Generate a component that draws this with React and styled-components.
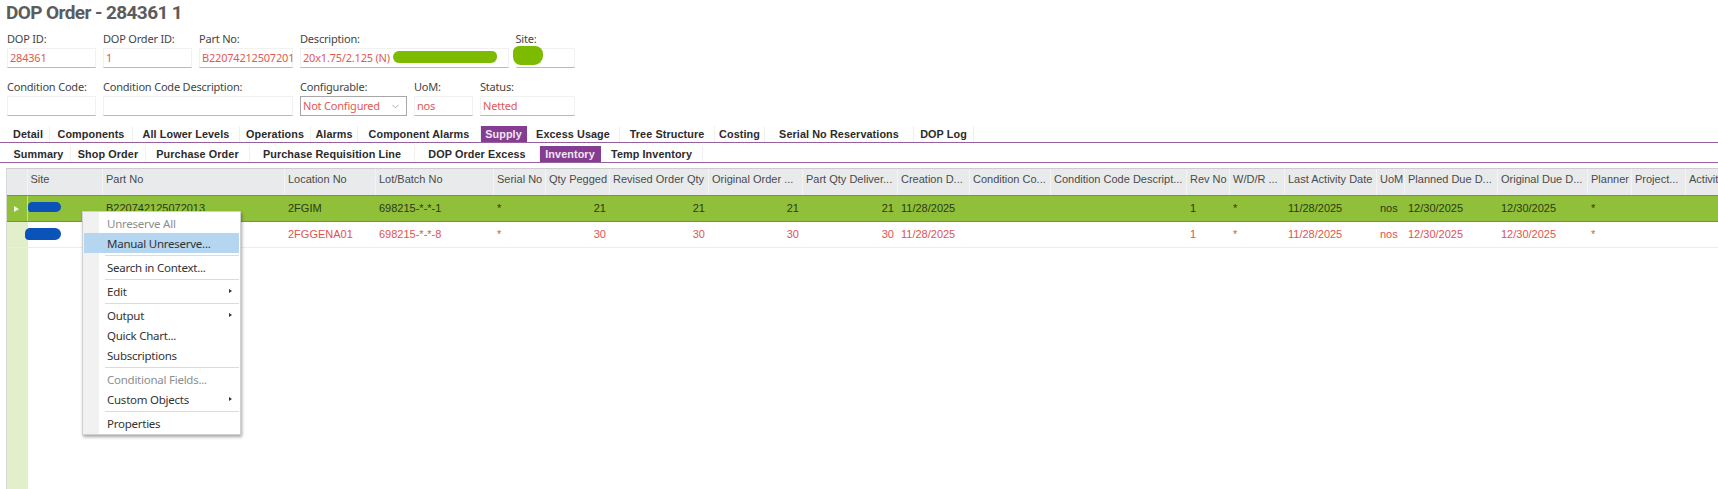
import React from 'react';
import styled, { createGlobalStyle } from 'styled-components';
import { ChevronDown } from 'lucide-react';

const mainTabs = [
  ['Detail', 43],
  ['Components', 83],
  ['All Lower Levels', 107],
  ['Operations', 71],
  ['Alarms', 47],
  ['Component Alarms', 123],
  ['Supply', 46, true],
  ['Excess Usage', 93],
  ['Tree Structure', 95],
  ['Costing', 50],
  ['Serial No Reservations', 149],
  ['DOP Log', 60],
];

const subTabs = [
  ['Summary', 64],
  ['Shop Order', 75],
  ['Purchase Order', 104],
  ['Purchase Requisition Line', 165],
  ['DOP Order Excess', 125],
  ['Inventory', 61, true],
  ['Temp Inventory', 102],
];

const columns = [
  ['Site', 75.5],
  ['Part No', 182],
  ['Location No', 91],
  ['Lot/Batch No', 118],
  ['Serial No', 52],
  ['Qty Pegged', 64, true],
  ['Revised Order Qty', 99, true],
  ['Original Order ...', 94, true],
  ['Part Qty Deliver...', 95, true],
  ['Creation D...', 72],
  ['Condition Co...', 81],
  ['Condition Code Descript...', 136],
  ['Rev No', 43],
  ['W/D/R ...', 55],
  ['Last Activity Date', 92],
  ['UoM', 28],
  ['Planned Due D...', 93],
  ['Original Due D...', 90],
  ['Planner', 44],
  ['Project...', 54],
  ['Activity...', 60],
];

const gridTemplate = `20.5px ${columns.map((c) => c[1] + 'px').join(' ')}`;

const rows = [
  {
    selected: true,
    cells: ['', 'B220742125072013', '2FGIM', '698215-*-*-1', '*', '21', '21', '21', '21', '11/28/2025', '', '', '1', '*', '11/28/2025', 'nos', '12/30/2025', '12/30/2025', '*', '', ''],
  },
  {
    selected: false,
    cells: ['', '', '2FGGENA01', '698215-*-*-8', '*', '30', '30', '30', '30', '11/28/2025', '', '', '1', '*', '11/28/2025', 'nos', '12/30/2025', '12/30/2025', '*', '', ''],
  },
];

const GlobalStyle = createGlobalStyle`
  html, body {
    margin: 0;
    padding: 0;
    background: #ffffff;
  }
`;

const Page = styled.div`
  position: relative;
  height: 489px;
  width: 1718px;
  overflow: hidden;
  background: #ffffff;
  display: flex;
  flex-direction: column;
  font-family: 'Liberation Sans', Arial, sans-serif;
`;

const Title = styled.h1`
  margin: 0;
  height: 32px;
  padding: 0 0 0 6px;
  font-family: 'Roboto', sans-serif;
  font-size: 19px;
  line-height: 26px;
  font-weight: 700;
  letter-spacing: -0.6px;
  color: #5c5c5c;
  white-space: nowrap;
`;

const FieldRow = styled.div`
  display: flex;
  gap: 7px;
  padding-left: 7px;
  height: 36px;
  & + & {
    margin-top: 12px;
  }
`;

const Field = styled.div`
  width: ${(p) => p.$width}px;
  display: flex;
  flex-direction: column;
`;

const Label = styled.label`
  height: 16px;
  font-family: 'Noto Sans', sans-serif;
  font-size: 11px;
  line-height: 14px;
  letter-spacing: -0.2px;
  color: #444444;
  white-space: nowrap;
`;

const Input = styled.div`
  position: relative;
  height: 20px;
  box-sizing: border-box;
  padding: 0 2px;
  background: #ffffff;
  border: 1px solid #f1f1f1;
  border-bottom: 1px solid #b9b9b9;
  font-family: 'Noto Sans', sans-serif;
  font-size: 11px;
  line-height: 18px;
  letter-spacing: -0.2px;
  color: #df5a55;
  white-space: nowrap;
`;

const Select = styled(Input)`
  display: flex;
  align-items: center;
  justify-content: space-between;
  border: 1px solid #a8a8a8;
  color: #df5a55;
  svg {
    color: #8a8a8a;
    margin-right: 3px;
  }
`;

const GreenMark = styled.span`
  position: absolute;
  left: ${(p) => p.$left}px;
  top: ${(p) => p.$top}px;
  width: ${(p) => p.$width}px;
  height: ${(p) => p.$height}px;
  background: #7cbb00;
  border-radius: ${(p) => p.$radius};
`;

const TabBar = styled.div`
  display: flex;
  margin-top: ${(p) => p.$top}px;
  padding-left: 7px;
  height: 16px;
  box-sizing: content-box;
  border-bottom: 1.5px solid #98609f;
`;

const Tab = styled.div`
  width: ${(p) => p.$width}px;
  flex: none;
  box-sizing: border-box;
  text-align: center;
  font-size: 10.8px;
  font-weight: 700;
  line-height: 16px;
  letter-spacing: 0.1px;
  white-space: nowrap;
  color: ${(p) => (p.$active ? '#f1e6f3' : '#2b2b2b')};
  background: ${(p) => (p.$active ? '#853d92' : '#ffffff')};
  border-right: 1px solid ${(p) => (p.$active ? '#853d92' : '#f0f0f0')};
`;

const Table = styled.div`
  flex: 1;
  margin: 5px 0 0 6px;
  display: flex;
  flex-direction: column;
  min-height: 0;
  border-top: 1.5px solid #cdcdcd;
  border-left: 1px solid #d8d8d8;
`;

const HeaderRow = styled.div`
  display: grid;
  grid-template-columns: ${gridTemplate};
  height: 26px;
  background: #e9eaec;
`;

const HeaderCell = styled.div`
  padding: 2px 0 0 3px;
  font-size: 11px;
  line-height: 16px;
  color: #4a4a4a;
  white-space: nowrap;
  border-right: 1px solid #f4f4f5;
  text-align: left;
`;

const DataRow = styled.div`
  display: grid;
  grid-template-columns: ${gridTemplate};
  height: 26.5px;
  box-sizing: border-box;
  background: ${(p) => (p.$selected ? '#90bf3a' : '#ffffff')};
  border-bottom: 1px solid ${(p) => (p.$selected ? '#6f9a30' : '#ececec')};
  border-top: ${(p) => (p.$selected ? '1px solid #6f9a30' : 'none')};
  color: ${(p) => (p.$selected ? '#2d3a14' : '#e0544f')};
`;

const Gutter = styled.div`
  display: flex;
  align-items: center;
  padding-left: 7px;
  background: ${(p) => (p.$selected ? '#90bf3a' : '#e3eecb')};
  border-right: 1px solid ${(p) => (p.$selected ? '#c9e08f' : '#e3eecb')};
`;

const Arrow = styled.span`
  width: 0;
  height: 0;
  border-left: 5px solid #f4f8ea;
  border-top: 3px solid transparent;
  border-bottom: 3px solid transparent;
`;

const Cell = styled.div`
  position: relative;
  padding: 0 ${(p) => (p.$right ? 4 : 2)}px 0 3px;
  font-size: 11px;
  line-height: 25px;
  white-space: nowrap;
  text-align: ${(p) => (p.$right ? 'right' : 'left')};
`;

const BlueMark = styled.span`
  position: absolute;
  left: ${(p) => p.$left}px;
  top: ${(p) => p.$top}px;
  width: ${(p) => p.$width}px;
  height: ${(p) => p.$height}px;
  background: #0b52b9;
  border-radius: 5px 6px 6px 4px;
`;

const GutterFill = styled.div`
  flex: 1;
  width: 20.5px;
  background: #e3eecb;
`;

const Menu = styled.div`
  position: absolute;
  left: 82px;
  top: 211px;
  width: 159px;
  box-sizing: border-box;
  padding: 1px;
  background: linear-gradient(to right, #f1f1f1 16px, #ffffff 16px);
  border: 1px solid #d0d0d0;
  box-shadow: 1px 2px 3px rgba(0, 0, 0, 0.35);
`;

const MenuItem = styled.div`
  display: flex;
  align-items: center;
  justify-content: space-between;
  height: 20px;
  padding: 0 7px 0 23px;
  font-family: 'Noto Sans', sans-serif;
  font-size: 11.5px;
  letter-spacing: -0.25px;
  color: ${(p) => (p.$disabled ? '#8d8d8d' : '#333333')};
  background: ${(p) => (p.$active ? '#b5d6f0' : 'transparent')};
`;

const SubArrow = styled.span`
  width: 0;
  height: 0;
  border-left: 3px solid #333333;
  border-top: 2.5px solid transparent;
  border-bottom: 2.5px solid transparent;
`;

const Separator = styled.div`
  height: 1px;
  margin: 1.5px 0 1.5px 21px;
  background: #dcdcdc;
`;

const menuItems = [
  { label: 'Unreserve All', disabled: true },
  { label: 'Manual Unreserve...', active: true },
  { sep: true },
  { label: 'Search in Context...' },
  { sep: true },
  { label: 'Edit', sub: true },
  { sep: true },
  { label: 'Output', sub: true },
  { label: 'Quick Chart...' },
  { label: 'Subscriptions' },
  { sep: true },
  { label: 'Conditional Fields...', disabled: true },
  { label: 'Custom Objects', sub: true },
  { sep: true },
  { label: 'Properties' },
];

export default function App() {
  return (
    <Page>
      <GlobalStyle />
      <Title>DOP Order - 284361 1</Title>

      <FieldRow>
        <Field $width={89}>
          <Label>DOP ID:</Label>
          <Input>284361</Input>
        </Field>
        <Field $width={89}>
          <Label>DOP Order ID:</Label>
          <Input>1</Input>
        </Field>
        <Field $width={94}>
          <Label>Part No:</Label>
          <Input>B22074212507201</Input>
        </Field>
        <Field $width={208.5}>
          <Label>Description:</Label>
          <Input>
            20x1.75/2.125 (N)
            <GreenMark $left={92} $top={2} $width={104} $height={12} $radius="6px 5px 6px 6px" />
          </Input>
        </Field>
        <Field $width={59.5}>
          <Label>Site:</Label>
          <Input>
            <GreenMark $left={-3.5} $top={-3} $width={30} $height={19} $radius="6px 8px 9px 8px" />
          </Input>
        </Field>
      </FieldRow>

      <FieldRow>
        <Field $width={89}>
          <Label>Condition Code:</Label>
          <Input />
        </Field>
        <Field $width={190}>
          <Label>Condition Code Description:</Label>
          <Input />
        </Field>
        <Field $width={107}>
          <Label>Configurable:</Label>
          <Select>
            Not Configured
            <ChevronDown size={11} strokeWidth={1.5} />
          </Select>
        </Field>
        <Field $width={59}>
          <Label>UoM:</Label>
          <Input>nos</Input>
        </Field>
        <Field $width={95}>
          <Label>Status:</Label>
          <Input>Netted</Input>
        </Field>
      </FieldRow>

      <TabBar $top={10}>
        {mainTabs.map(([label, width, active]) => (
          <Tab key={label} $width={width} $active={active}>
            {label}
          </Tab>
        ))}
      </TabBar>

      <TabBar $top={3}>
        {subTabs.map(([label, width, active]) => (
          <Tab key={label} $width={width} $active={active}>
            {label}
          </Tab>
        ))}
      </TabBar>

      <Table>
        <HeaderRow>
          <HeaderCell />
          {columns.map(([label]) => (
            <HeaderCell key={label}>{label}</HeaderCell>
          ))}
        </HeaderRow>

        {rows.map((row, i) => (
          <DataRow key={i} $selected={row.selected}>
            <Gutter $selected={row.selected}>{row.selected && <Arrow />}</Gutter>
            {row.cells.map((value, j) => (
              <Cell key={j} $right={columns[j][2]}>
                {j === 0 &&
                  (row.selected ? (
                    <BlueMark $left={0.5} $top={6} $width={33} $height={10} />
                  ) : (
                    <BlueMark $left={-2.5} $top={6.5} $width={36} $height={12} />
                  ))}
                {value}
              </Cell>
            ))}
          </DataRow>
        ))}

        <GutterFill />
      </Table>

      <Menu>
        {menuItems.map((item, i) =>
          item.sep ? (
            <Separator key={i} />
          ) : (
            <MenuItem key={i} $disabled={item.disabled} $active={item.active}>
              {item.label}
              {item.sub && <SubArrow />}
            </MenuItem>
          )
        )}
      </Menu>
    </Page>
  );
}
